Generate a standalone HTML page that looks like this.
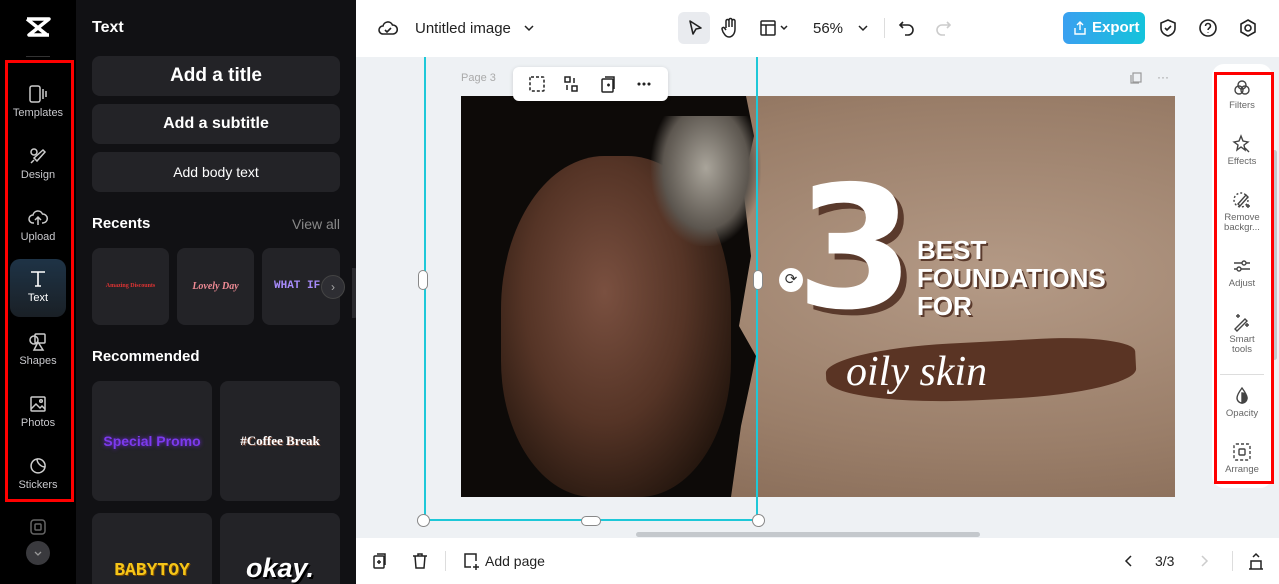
<!DOCTYPE html>
<html><head><meta charset="utf-8"><style>
*{box-sizing:border-box;margin:0;padding:0}
html,body{width:1279px;height:584px;overflow:hidden}
body{font-family:"Liberation Sans",sans-serif;background:#eef1f4;position:relative}
.nav{position:absolute;left:0;top:0;width:76px;height:584px;background:#000}
.panel{position:absolute;left:76px;top:0;width:280px;height:584px;background:#111114;overflow:hidden}
.ni{position:absolute;left:0;width:76px;text-align:center;color:#c8c8cc;font-size:11px}
.ni svg{display:block;margin:0 auto 3px}
.btn{position:absolute;left:16px;width:248px;height:40px;background:#232327;border-radius:8px;color:#fff;text-align:center;font-weight:bold}
.card{position:absolute;background:#232327;border-radius:8px}
.top{position:absolute;left:356px;top:0;width:923px;height:57px;background:#fff}
.bot{position:absolute;left:356px;top:538px;width:923px;height:46px;background:#fff}
.rp{position:absolute;left:1212px;top:64px;width:60px;height:424px;background:#fff;border-radius:12px}
.ri{position:absolute;left:0;width:60px;text-align:center;color:#666;font-size:9.5px;line-height:10px}
.ri svg{display:block;margin:0 auto 3px}
</style></head><body>
<div class="nav">
<svg style="position:absolute;left:24px;top:16px" width="28" height="22" viewBox="0 0 28 22"><path d="M3 3h22L5 19h20M3 3l20 16" stroke="#fff" stroke-width="3.5" fill="none" stroke-linejoin="round"/></svg>
<div style="position:absolute;left:26px;top:56px;width:24px;height:1px;background:#333"></div>
<div class="ni" style="top:84px"><svg width="20" height="20" viewBox="0 0 20 20" fill="none" stroke="#ccc" stroke-width="1.5"><rect x="2" y="2" width="10" height="16" rx="2"/><path d="M15 5v10M18 7v6"/></svg>Templates</div>
<div class="ni" style="top:146px"><svg width="20" height="20" viewBox="0 0 20 20" fill="none" stroke="#ccc" stroke-width="1.5"><circle cx="6" cy="6" r="3"/><path d="M9 15l8-9-2-2-9 8zM3 17l3-3"/></svg>Design</div>
<div class="ni" style="top:208px"><svg width="20" height="20" viewBox="0 0 20 20" fill="none" stroke="#ccc" stroke-width="1.5"><path d="M6 15H5a4 4 0 010-8 5 5 0 019.5-1A4 4 0 0115 15h-1M10 17v-7M7 12l3-3 3 3"/></svg>Upload</div>
<div style="position:absolute;left:10px;top:259px;width:56px;height:58px;border-radius:10px;background:linear-gradient(#1e3346,#1a2026)"></div>
<div class="ni" style="top:269px;color:#fff"><svg width="20" height="20" viewBox="0 0 20 20" fill="none" stroke="#fff" stroke-width="1.6"><path d="M3 3h14M10 3v14M7 17h6"/></svg>Text</div>
<div class="ni" style="top:332px"><svg width="20" height="20" viewBox="0 0 20 20" fill="none" stroke="#ccc" stroke-width="1.5"><circle cx="6" cy="8" r="4"/><rect x="7" y="2" width="10" height="9" rx="1"/><path d="M10 10l-4 8h9z"/></svg>Shapes</div>
<div class="ni" style="top:394px"><svg width="20" height="20" viewBox="0 0 20 20" fill="none" stroke="#ccc" stroke-width="1.5"><rect x="3" y="3" width="14" height="14" rx="1"/><path d="M3 15l5-5 4 4 2-2 3 3"/><circle cx="13" cy="7" r="1.3"/></svg>Photos</div>
<div class="ni" style="top:456px"><svg width="20" height="20" viewBox="0 0 20 20" fill="none" stroke="#ccc" stroke-width="1.5"><path d="M17 11a7 7 0 11-8-8c0 4 4 8 8 8zM9 3a7 7 0 018 8"/></svg>Stickers</div>
<div style="position:absolute;left:5px;top:60px;width:69px;height:442px;border:3px solid #f00"></div>
<svg style="position:absolute;left:29px;top:518px" width="18" height="18" viewBox="0 0 18 18" fill="none" stroke="#666" stroke-width="1.5"><rect x="2" y="2" width="14" height="14" rx="3"/><rect x="6" y="6" width="6" height="6" rx="1"/></svg>
<div style="position:absolute;left:26px;top:541px;width:24px;height:24px;border-radius:50%;background:#3a3a3e"><svg width="24" height="24" viewBox="0 0 24 24"><path d="M9 11l3 3 3-3" stroke="#999" fill="none" stroke-width="1.3"/></svg></div>
</div>
<div class="panel">
<div style="position:absolute;left:16px;top:19px;color:#fff;font-weight:bold;font-size:16px">Text</div>
<div class="btn" style="top:56px;font-size:19px;line-height:40px">Add a title</div>
<div class="btn" style="top:104px;font-size:16px;line-height:40px">Add a subtitle</div>
<div class="btn" style="top:152px;font-size:14px;line-height:40px;font-weight:normal">Add body text</div>
<div style="position:absolute;left:16px;top:215px;color:#fff;font-weight:bold;font-size:15px">Recents</div>
<div style="position:absolute;right:16px;top:216px;color:#888;font-size:14px">View all</div>
<div class="card" style="left:16px;top:248px;width:77px;height:77px;color:#d33;font-size:6px;font-family:'Liberation Serif';font-weight:bold;text-align:center;line-height:77px">Amazing Discounts</div>
<div class="card" style="left:101px;top:248px;width:77px;height:77px;color:#f08b95;font-size:10px;font-family:'Liberation Serif';font-style:italic;font-weight:bold;text-align:center;line-height:77px">Lovely Day</div>
<div class="card" style="left:186px;top:248px;width:78px;height:77px;color:#a78bfa;font-size:11px;font-family:'Liberation Mono';font-weight:bold;line-height:77px;padding-left:12px">WHAT IF.</div>
<div style="position:absolute;left:245px;top:275px;width:24px;height:24px;border-radius:50%;background:#2e2e33;border:1px solid #444;color:#aaa;font-size:12px;text-align:center;line-height:22px">›</div>
<div style="position:absolute;left:16px;top:348px;color:#fff;font-weight:bold;font-size:15px">Recommended</div>
<div class="card" style="left:16px;top:381px;width:120px;height:120px;color:#7c3aed;font-size:14px;font-weight:bold;text-align:center;line-height:120px;text-shadow:0 0 4px #6d28d9">Special Promo</div>
<div class="card" style="left:144px;top:381px;width:120px;height:120px;color:#fff;font-size:13px;font-family:'Liberation Serif';font-weight:bold;text-align:center;line-height:120px;text-shadow:1px 1px 0 #7a4a3a">#Coffee Break</div>
<div class="card" style="left:16px;top:513px;width:120px;height:80px;color:#f5c518;font-size:18px;font-family:'Liberation Mono';font-weight:bold;text-align:center;padding-top:48px;text-shadow:1px 1px 0 #7a4a00">BABYTOY</div>
<div class="card" style="left:144px;top:513px;width:120px;height:80px;color:#fff;font-size:27px;font-weight:bold;font-style:italic;text-align:center;padding-top:40px;text-shadow:2px 2px 0 #000">okay.</div>
<div style="position:absolute;left:276px;top:268px;width:8px;height:50px;background:#2a2a2e;border-radius:0 6px 6px 0"></div>
</div>
<div class="top">
<svg style="position:absolute;left:22px;top:19px" width="20" height="18" viewBox="0 0 20 18" fill="none" stroke="#222" stroke-width="1.6"><path d="M6 15H5a4 4 0 010-8 5 5 0 019.5-1A4 4 0 0115 15zM7 11l2 2 4-4"/></svg>
<div style="position:absolute;left:59px;top:20px;font-size:15px;color:#222">Untitled image</div>
<svg style="position:absolute;left:167px;top:22px" width="12" height="12" viewBox="0 0 12 12"><path d="M2 4l4 4 4-4" stroke="#222" fill="none" stroke-width="1.5"/></svg>
<div style="position:absolute;left:322px;top:12px;width:32px;height:32px;background:#e9ebef;border-radius:6px"></div>
<svg style="position:absolute;left:329px;top:18px" width="20" height="20" viewBox="0 0 20 20"><path d="M5 3l11 7-5 1-3 5z" stroke="#222" fill="none" stroke-width="1.6" stroke-linejoin="round"/></svg>
<svg style="position:absolute;left:364px;top:17px" width="20" height="22" viewBox="0 0 20 22" fill="none" stroke="#222" stroke-width="1.5"><path d="M6 11V4a1.5 1.5 0 013 0v6M9 10V3a1.5 1.5 0 013 0v7M12 10V4a1.5 1.5 0 013 0v8c0 5-3 8-6 8-3 0-4-2-6-5l-1-3a1.4 1.4 0 012.5-1L6 13"/></svg>
<svg style="position:absolute;left:403px;top:19px" width="32" height="18" viewBox="0 0 32 18" fill="none" stroke="#222" stroke-width="1.5"><rect x="2" y="2" width="14" height="14" rx="1"/><path d="M2 6h14M7 6v10M22 7l3 3 3-3"/></svg>
<div style="position:absolute;left:457px;top:20px;font-size:15px;color:#222">56%</div>
<svg style="position:absolute;left:501px;top:22px" width="12" height="12" viewBox="0 0 12 12"><path d="M2 4l4 4 4-4" stroke="#222" fill="none" stroke-width="1.5"/></svg>
<div style="position:absolute;left:528px;top:18px;width:1px;height:20px;background:#ddd"></div>
<svg style="position:absolute;left:541px;top:18px" width="20" height="20" viewBox="0 0 20 20"><path d="M6 4L3 7l3 3M3 7h8a5 5 0 010 10H8" stroke="#222" fill="none" stroke-width="1.6"/></svg>
<svg style="position:absolute;left:577px;top:18px" width="20" height="20" viewBox="0 0 20 20"><path d="M14 4l3 3-3 3M17 7H9a5 5 0 000 10h3" stroke="#ccc" fill="none" stroke-width="1.6"/></svg>
<div style="position:absolute;left:707px;top:12px;width:82px;height:32px;border-radius:6px;background:linear-gradient(90deg,#3aa0f0,#14c3db);color:#fff;font-size:15px;font-weight:bold;line-height:32px;padding-left:29px">Export</div>
<svg style="position:absolute;left:717px;top:20px" width="14" height="16" viewBox="0 0 14 16" fill="none" stroke="#fff" stroke-width="1.4"><path d="M7 10V2M4 5l3-3 3 3M2 8v6h10V8"/></svg>
<svg style="position:absolute;left:802px;top:18px" width="20" height="20" viewBox="0 0 20 20" fill="none" stroke="#222" stroke-width="1.6"><path d="M10 2l7 3v5c0 4-3 7-7 8-4-1-7-4-7-8V5zM7 10l2 2 4-4"/></svg>
<svg style="position:absolute;left:842px;top:18px" width="20" height="20" viewBox="0 0 20 20" fill="none" stroke="#222" stroke-width="1.6"><circle cx="10" cy="10" r="8"/><path d="M7.5 8a2.5 2.5 0 115 0c0 2-2.5 2-2.5 4M10 14.5v.5"/></svg>
<svg style="position:absolute;left:882px;top:18px" width="20" height="20" viewBox="0 0 20 20" fill="none" stroke="#222" stroke-width="1.6"><path d="M10 2l7 4v8l-7 4-7-4V6z"/><circle cx="10" cy="10" r="3"/></svg>
</div>
<!-- canvas -->
<div style="position:absolute;left:461px;top:72px;font-size:11px;color:#aaa">Page 3</div>
<svg style="position:absolute;left:1129px;top:71px" width="14" height="14" viewBox="0 0 14 14" fill="none" stroke="#999" stroke-width="1.2"><rect x="4" y="2" width="8" height="9"/><path d="M2 4v8h8"/></svg>
<div style="position:absolute;left:1157px;top:70px;font-size:12px;color:#999">···</div>
<div style="position:absolute;left:461px;top:96px;width:714px;height:401px;background:radial-gradient(ellipse at 75% 45%,#b49a86 0%,#9a7e69 55%,#7e624e 100%);overflow:hidden">
<div style="position:absolute;left:0;top:0;width:300px;height:401px;background:#0d0a08;clip-path:polygon(0 0,285px 0,293px 40px,282px 90px,290px 160px,278px 230px,295px 260px,280px 330px,270px 401px,0 401px)"></div>
<div style="position:absolute;left:40px;top:60px;width:230px;height:341px;background:radial-gradient(ellipse at 45% 40%,#7a5040 0%,#553426 45%,#24160e 80%,transparent 100%);border-radius:45% 45% 40% 40%"></div>
<div style="position:absolute;left:190px;top:20px;width:110px;height:130px;background:radial-gradient(ellipse at 50% 40%,#a9a49a,#5c564f 55%,transparent 72%)"></div>
<div style="position:absolute;left:335px;top:78px;color:#fff;font-family:'DejaVu Sans',sans-serif;font-size:170px;font-weight:bold;line-height:150px;letter-spacing:-6px;text-shadow:6px 6px 0 #5a3a2c">3</div>
<div style="position:absolute;left:456px;top:140px;color:#fff;font-size:26px;font-weight:bold;line-height:28px;text-shadow:2px 2px 0 #5a3a2c">BEST<br>FOUNDATIONS<br>FOR</div>
<div style="position:absolute;left:365px;top:246px;width:310px;height:58px;background:#5a3424;border-radius:40% 30% 40% 50%;transform:rotate(-3deg)"></div>
<div style="position:absolute;left:385px;top:252px;color:#fff;font-size:42px;font-family:'Liberation Serif';font-style:italic">oily skin</div>
</div>
<div style="position:absolute;left:424px;top:57px;width:334px;height:464px;border:2px solid #1ec8d8;border-top:none"></div>
<div style="position:absolute;left:418px;top:270px;width:10px;height:20px;border-radius:5px;background:#fff;border:1px solid #888"></div>
<div style="position:absolute;left:753px;top:270px;width:10px;height:20px;border-radius:5px;background:#fff;border:1px solid #888"></div>
<div style="position:absolute;left:417px;top:514px;width:13px;height:13px;border-radius:50%;background:#fff;border:1px solid #888"></div>
<div style="position:absolute;left:752px;top:514px;width:13px;height:13px;border-radius:50%;background:#fff;border:1px solid #888"></div>
<div style="position:absolute;left:581px;top:516px;width:20px;height:10px;border-radius:5px;background:#fff;border:1px solid #888"></div>
<div style="position:absolute;left:779px;top:268px;width:24px;height:24px;border-radius:50%;background:#fff;color:#333;text-align:center;line-height:24px;font-size:15px">⟳</div>
<div style="position:absolute;left:513px;top:67px;width:155px;height:34px;background:#fff;border-radius:6px;box-shadow:0 1px 4px rgba(0,0,0,.15)"></div>
<svg style="position:absolute;left:528px;top:75px" width="130" height="18" viewBox="0 0 130 18" fill="none" stroke="#222" stroke-width="1.5"><rect x="2" y="2" width="14" height="14" rx="1" stroke-dasharray="3 2"/><rect x="37" y="2" width="5" height="5"/><rect x="44" y="11" width="5" height="5"/><path d="M46 3v5M39 10v5"/><rect x="74" y="4" width="11" height="13" rx="1"/><path d="M77 2h9v12M79 10h3M80.5 8.5v3"/><circle cx="111" cy="9" r=".8" fill="#222"/><circle cx="116" cy="9" r=".8" fill="#222"/><circle cx="121" cy="9" r=".8" fill="#222"/></svg>
<div style="position:absolute;left:636px;top:532px;width:344px;height:5px;border-radius:3px;background:#c4c8cc"></div>
<div style="position:absolute;left:1272px;top:150px;width:5px;height:210px;border-radius:3px;background:#c4c8cc"></div>
<div class="rp">
<div class="ri" style="top:14px"><svg width="20" height="20" viewBox="0 0 20 20" fill="none" stroke="#444" stroke-width="1.4"><circle cx="10" cy="7" r="4"/><circle cx="7" cy="12" r="4"/><circle cx="13" cy="12" r="4"/></svg>Filters</div>
<div class="ri" style="top:70px"><svg width="20" height="20" viewBox="0 0 20 20" fill="none" stroke="#444" stroke-width="1.4"><path d="M9 2l2 5 5 1-4 3 1 5-4-3-4 3 1-5-4-3 5-1zM13 14l4 4"/></svg>Effects</div>
<div class="ri" style="top:126px"><svg width="20" height="20" viewBox="0 0 20 20" fill="none" stroke="#444" stroke-width="1.4"><circle cx="9" cy="10" r="7" stroke-dasharray="2 2"/><path d="M6 14l8-9 2 2-8 9zM16 14v4M14 16h4"/></svg>Remove<br>backgr...</div>
<div class="ri" style="top:192px"><svg width="20" height="20" viewBox="0 0 20 20" fill="none" stroke="#444" stroke-width="1.4"><path d="M2 7h16M2 13h16"/><circle cx="12" cy="7" r="2" fill="#fff"/><circle cx="7" cy="13" r="2" fill="#fff"/></svg>Adjust</div>
<div class="ri" style="top:248px"><svg width="20" height="20" viewBox="0 0 20 20" fill="none" stroke="#444" stroke-width="1.4"><path d="M3 17l10-10 2 2-10 10zM6 2v4M4 4h4M15 11v4M13 13h4"/></svg>Smart<br>tools</div>
<div style="position:absolute;left:8px;top:310px;width:44px;height:1px;background:#ddd"></div>
<div class="ri" style="top:322px"><svg width="20" height="20" viewBox="0 0 20 20" fill="none" stroke="#444" stroke-width="1.4"><path d="M10 2c3 4 5 7 5 10a5 5 0 01-10 0c0-3 2-6 5-10z"/><path d="M10 17a5 5 0 000-10z" fill="#444"/></svg>Opacity</div>
<div class="ri" style="top:378px"><svg width="20" height="20" viewBox="0 0 20 20" fill="none" stroke="#444" stroke-width="1.4"><rect x="2" y="2" width="16" height="16" rx="2" stroke-dasharray="3 2"/><rect x="7" y="7" width="6" height="6" rx="1"/></svg>Arrange</div>
</div>
<div style="position:absolute;left:1214px;top:72px;width:60px;height:412px;border:3px solid #f00"></div>
<div class="bot">
<svg style="position:absolute;left:15px;top:14px" width="18" height="18" viewBox="0 0 18 18" fill="none" stroke="#222" stroke-width="1.5"><rect x="3" y="4" width="10" height="12" rx="1"/><path d="M6 2h8v11M6 10h4M8 8v4"/></svg>
<svg style="position:absolute;left:55px;top:14px" width="18" height="18" viewBox="0 0 18 18" fill="none" stroke="#222" stroke-width="1.5"><path d="M2 4h14M7 4V2h4v2M4 4l1 12h8l1-12"/></svg>
<div style="position:absolute;left:89px;top:13px;width:1px;height:20px;background:#ddd"></div>
<svg style="position:absolute;left:106px;top:14px" width="18" height="18" viewBox="0 0 18 18" fill="none" stroke="#222" stroke-width="1.5"><path d="M9 15H3V2h11v7M14 12v6M11 15h6"/></svg>
<div style="position:absolute;left:129px;top:15px;font-size:14px;color:#222">Add page</div>
<svg style="position:absolute;left:767px;top:16px" width="12" height="14" viewBox="0 0 12 14"><path d="M8 2L3 7l5 5" stroke="#222" fill="none" stroke-width="1.5"/></svg>
<div style="position:absolute;left:799px;top:15px;font-size:14px;color:#222">3/3</div>
<svg style="position:absolute;left:842px;top:16px" width="12" height="14" viewBox="0 0 12 14"><path d="M4 2l5 5-5 5" stroke="#ccc" fill="none" stroke-width="1.5"/></svg>
<div style="position:absolute;left:876px;top:13px;width:1px;height:20px;background:#ddd"></div>
<svg style="position:absolute;left:891px;top:13px" width="18" height="20" viewBox="0 0 18 20" fill="none" stroke="#222" stroke-width="1.5"><path d="M2 18h14M4 18V10h10v8M6 6l3-3 3 3"/></svg>
</div>
</body></html>
